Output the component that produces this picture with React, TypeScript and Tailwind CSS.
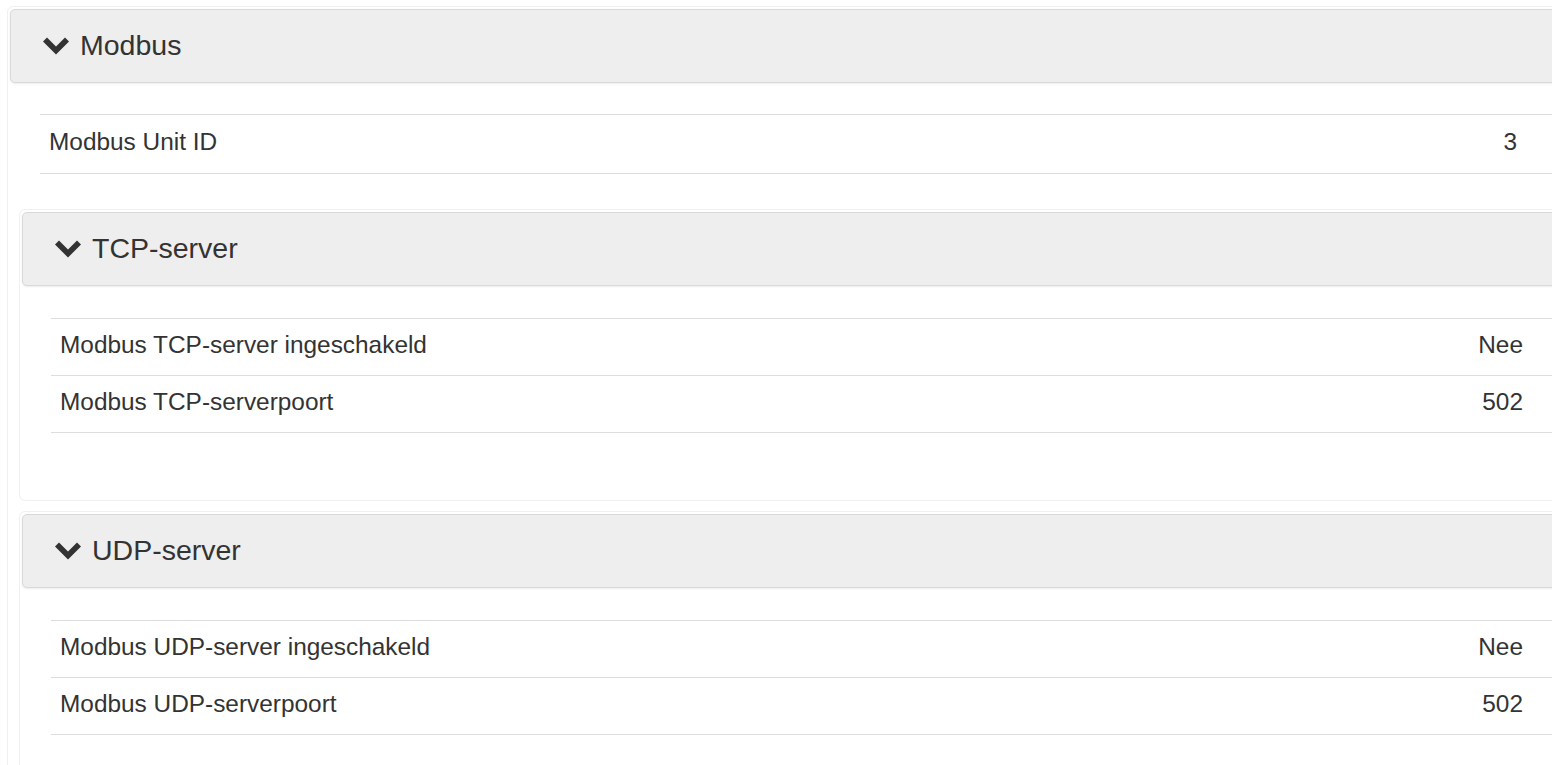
import React from "react";

const Chevron = () => (
  <svg width="26" height="18" viewBox="0 0 26 18" className="shrink-0">
    <polygon points="0,4.5 4,0.5 13,9.5 22,0.5 26,4.5 13,17.5" fill="#333333" />
  </svg>
);

const Header = ({ title }: { title: string }) => (
  <div className="h-[74px] border border-[#d9d9d9] rounded-[5px] bg-[#eeeeee] shadow-[0_1px_2px_rgba(0,0,0,0.08)] flex items-center pl-[32px] gap-[11px]">
    <Chevron />
    <span className="text-[28.5px] leading-none text-[#333333] pb-[2px]">{title}</span>
  </div>
);

const Rows = ({ rows, pr, h }: { rows: [string, string][]; pr: string; h: string }) => (
  <div className="border-b border-[#dddddd]">
    {rows.map(([k, v]) => (
      <div key={k} className={`${h} border-t border-[#dddddd] flex items-center pl-[9px] pb-[4px]`}>
        <span className="flex-1 text-[24.4px] text-[#333333]">{k}</span>
        <span className={`text-[24.4px] text-[#333333] text-right ${pr}`}>{v}</span>
      </div>
    ))}
  </div>
);

export default function App() {
  return (
    <div className="w-[1552px] h-[765px] overflow-hidden bg-white font-['Liberation_Sans',Arial,sans-serif]">
      <div className="w-[1600px] pl-[7px] pt-[6px]">
        <div className="border border-[#f0f0f0] rounded-[6px] p-[2px] pb-[40px]">
          <Header title="Modbus" />
          <div className="ml-[30px] mt-[31px]">
            <Rows rows={[["Modbus Unit ID", "3"]]} pr="pr-[80px]" h="h-[59px]" />
          </div>
          <div className="ml-[9px] mt-[35px] flex flex-col gap-[10px]">
            <div className="border border-[#f0f0f0] rounded-[6px] p-[2px] pb-[67px]">
              <Header title="TCP-server" />
              <div className="ml-[29px] mt-[32px]">
                <Rows
                  rows={[
                    ["Modbus TCP-server ingeschakeld", "Nee"],
                    ["Modbus TCP-serverpoort", "502"],
                  ]}
                  pr="pr-[71px]"
                  h="h-[57px]"
                />
              </div>
            </div>
            <div className="border border-[#f0f0f0] rounded-[6px] p-[2px] pb-[67px]">
              <Header title="UDP-server" />
              <div className="ml-[29px] mt-[32px]">
                <Rows
                  rows={[
                    ["Modbus UDP-server ingeschakeld", "Nee"],
                    ["Modbus UDP-serverpoort", "502"],
                  ]}
                  pr="pr-[71px]"
                  h="h-[57px]"
                />
              </div>
            </div>
          </div>
        </div>
      </div>
    </div>
  );
}
